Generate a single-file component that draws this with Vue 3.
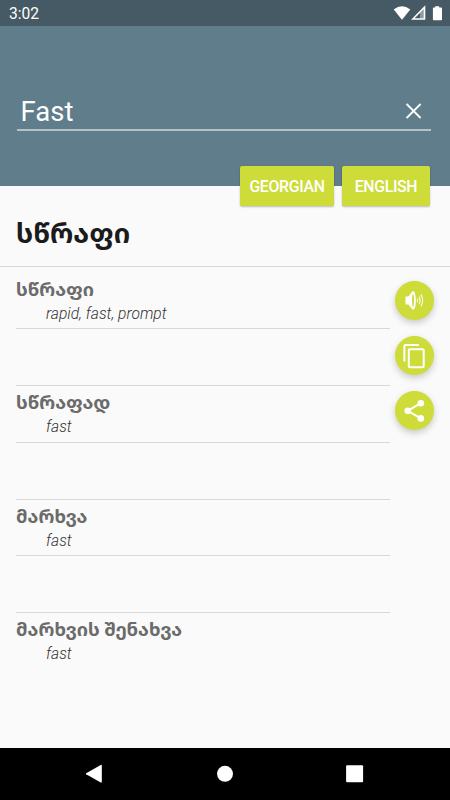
<template>
    <div class="screen">
        <header class="status-bar">
            <span class="clock">3:02</span>
            <svg class="status-icons" width="50" height="16" viewBox="0 0 50 16">
                <path d="M-0.3 3.5Q8 -2.8 16.3 3.5L8 13.8Z" fill="#fff" />
                <path d="M18.9 13L30.5 1.2V13Z" fill="none" stroke="#fff" stroke-width="1.6" />
                <path d="M26 12.5V6.6L30 3V12.5Z" fill="#fff" opacity="0.4" />
                <path d="M39.7 1.6H41.2V0.2H45.2V1.6H47.2Q48 1.6 48 2.4V13.4Q48 14.2 47.2 14.2H39.7Q38.9 14.2 38.9 13.4V2.4Q38.9 1.6 39.7 1.6Z" fill="#fff" />
            </svg>
        </header>

        <section class="search-panel">
            <div class="search-field">
                <span class="search-text">{{ query }}</span>
                <svg class="clear-icon" width="16" height="16" viewBox="0 0 16 16" fill="none" stroke="#fff" stroke-width="1.8">
                    <path d="M0.6 1L14.6 15M14.6 1L0.6 15" />
                </svg>
            </div>
            <div class="languages">
                <button class="language georgian">GEORGIAN</button>
                <button class="language english">ENGLISH</button>
            </div>
        </section>

        <h1 class="translation">სწრაფი</h1>

        <main class="content">
            <div class="entries">
                <div v-for="(entry, index) in entries" :key="index" class="entry">
                    <h2 class="word">{{ entry.word }}</h2>
                    <p class="meaning">{{ entry.meaning }}</p>
                </div>
            </div>

            <div class="actions">
                <button class="action">
                    <svg width="39" height="39" viewBox="0 0 39 39">
                        <path d="M10.6 15.4H13.4L17.6 10Q20.6 9.5 20.9 19.4Q20.6 29.3 17.6 28.8L13.4 23.6H10.6Q10.2 19.5 10.6 15.4Z" fill="#fff" />
                        <ellipse cx="18" cy="19.4" rx="1" ry="6.4" fill="#cddc39" />
                        <path d="M22.2 17.8Q23.3 19.4 22.2 21M24 15.6Q26.2 19.4 24 23.2M26 13.6Q29.4 19.4 26 25.2" fill="none" stroke="#fff" stroke-width="1.1" />
                    </svg>
                </button>
                <button class="action">
                    <svg width="39" height="39" viewBox="0 0 39 39" fill="none" stroke="#fff" stroke-width="2">
                        <path d="M9.4 25.5V9.9Q9.4 8.9 10.4 8.9H23.9" />
                        <rect x="13.8" y="13.3" width="14.9" height="18" rx="1" />
                    </svg>
                </button>
                <button class="action">
                    <svg width="39" height="39" viewBox="0 0 39 39">
                        <path d="M25.8 12.2L12.7 19.8L25.8 27.4" fill="none" stroke="#fff" stroke-width="2.1" />
                        <circle cx="25.8" cy="12.2" r="3.3" fill="#fff" />
                        <circle cx="12.7" cy="19.8" r="3.3" fill="#fff" />
                        <circle cx="25.8" cy="27.4" r="3.3" fill="#fff" />
                    </svg>
                </button>
            </div>
        </main>

        <nav class="nav-bar">
            <svg width="20" height="20" viewBox="0 0 20 20" fill="#fff">
                <path d="M1.2 9.2L15.7 1Q16.8 0.4 16.8 1.5V17.9Q16.8 19 15.7 18.4L1.2 10.2Q0.4 9.7 1.2 9.2Z" />
            </svg>
            <svg width="20" height="20" viewBox="0 0 20 20" fill="#fff">
                <circle cx="10" cy="9.8" r="8" />
            </svg>
            <svg width="20" height="20" viewBox="0 0 20 20" fill="#fff">
                <rect x="1.1" y="1.2" width="17" height="17" rx="1" />
            </svg>
        </nav>
    </div>
</template>

<script setup>
import { ref } from 'vue';

const query = ref('Fast');

const entries = [
    { word: 'სწრაფი', meaning: 'rapid, fast, prompt' },
    { word: 'სწრაფად', meaning: 'fast' },
    { word: 'მარხვა', meaning: 'fast' },
    { word: 'მარხვის შენახვა', meaning: 'fast' },
];
</script>

<style>
body {
    margin: 0;
}
</style>

<style scoped>
.screen {
    display: flex;
    flex-direction: column;
    width: 450px;
    height: 800px;
    overflow: hidden;
    background: #fafafa;
    font-family: Roboto, "Noto Sans Georgian", "Noto Sans", "DejaVu Sans", sans-serif;
}

.status-bar {
    display: flex;
    flex-shrink: 0;
    justify-content: space-between;
    height: 26px;
    padding: 0 6px 0 9px;
    box-sizing: border-box;
    background: #455a64;
    color: #fff;
}

.clock {
    font-size: 15.6px;
    line-height: 29px;
}

.status-icons {
    margin-top: 6px;
    overflow: visible;
}

.search-panel {
    display: flex;
    flex-direction: column;
    flex-shrink: 0;
    height: 160px;
    padding: 67px 19px 0 17px;
    box-sizing: border-box;
    background: #607d8b;
}

.search-field {
    display: flex;
    flex-shrink: 0;
    align-items: center;
    justify-content: space-between;
    height: 36px;
    padding: 0 9.5px 0 3.5px;
    border-bottom: 2px solid #b7c2c6;
}

.search-text {
    padding-top: 2px;
    font-size: 27.5px;
    line-height: 38px;
    color: #fff;
}

.languages {
    display: flex;
    justify-content: flex-end;
    gap: 8px;
    margin: 35px 1px 0 0;
}

.language {
    height: 40px;
    padding: 0;
    border: 0;
    border-radius: 2px;
    background: #cddc39;
    box-shadow: 0 1px 2px rgba(0, 0, 0, 0.25);
    color: #fff;
    font: 500 15.8px/41px Roboto, sans-serif;
    letter-spacing: -0.3px;
    text-align: center;
}

.georgian {
    width: 94px;
}

.english {
    width: 88px;
}

.translation {
    flex-shrink: 0;
    height: 81px;
    margin: 0;
    padding: 29px 16px 0;
    box-sizing: border-box;
    border-bottom: 1px solid #d8d8d8;
    color: #1b1b1b;
    font-size: 27.2px;
    font-weight: 700;
    line-height: 38px;
}

.content {
    display: flex;
    flex: 1;
    justify-content: space-between;
    padding: 5px 16px 0;
}

.entries {
    width: 374px;
}

.entry {
    height: 113.33px;
    box-sizing: border-box;
}

.entry::after {
    content: "";
    display: block;
    height: 56px;
    border-top: 1px solid #d8d8d8;
    border-bottom: 1px solid #d8d8d8;
}

.entry:last-child::after {
    display: none;
}

.word {
    height: 31px;
    margin: 0;
    padding-top: 4px;
    box-sizing: border-box;
    color: #6b6b6b;
    font-size: 18.6px;
    font-weight: 700;
    line-height: 28px;
}

.meaning {
    height: 25.33px;
    margin: 0;
    padding-left: 30px;
    color: #333;
    font-size: 15.6px;
    font-style: italic;
    font-weight: 300;
    line-height: 22.6px;
}

.actions {
    display: flex;
    flex-direction: column;
    gap: 16px;
    padding-top: 9px;
}

.action {
    display: block;
    width: 39px;
    height: 39px;
    padding: 0;
    border: 0;
    border-radius: 50%;
    background: #cddc39;
    box-shadow: 0 3px 7px rgba(0, 0, 0, 0.2);
}

.action svg {
    display: block;
}

.nav-bar {
    display: flex;
    flex-shrink: 0;
    align-items: center;
    justify-content: space-between;
    height: 52px;
    padding: 0 85px;
    box-sizing: border-box;
    background: #000;
}
</style>
